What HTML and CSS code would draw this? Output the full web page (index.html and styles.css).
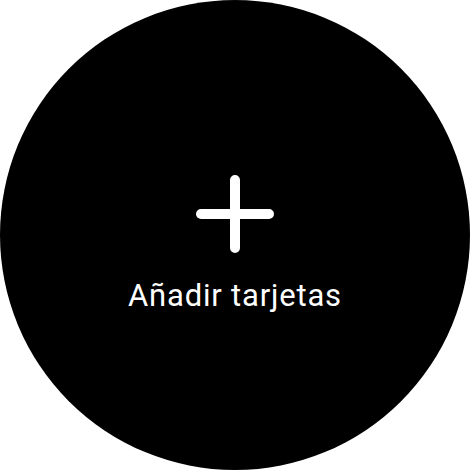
FILE: index.html
```html
<!doctype html>
<html lang="es">
<head>
  <meta charset="utf-8" />
  <meta name="viewport" content="width=device-width,initial-scale=1" />
  <title>Añadir tarjetas</title>
  <link rel="stylesheet" href="styles.css">
</head>
<body>
  <div class="watch">
    <div class="add">
      <svg class="plus" width="80" height="80" viewBox="0 0 80 80" aria-hidden="true">
        <path d="M40 6 V74 M6 40 H74" stroke="#fff" stroke-width="10" stroke-linecap="round" fill="none"/>
      </svg>
      <div class="label">Añadir tarjetas</div>
    </div>
  </div>
</body>
</html>
```

FILE: styles.css
```css
:root{--bg:#ffffff;--face:#000000;--fg:#ffffff}
html,body{margin:0;padding:0;background:var(--bg)}
body{font-family:Roboto,"Noto Sans",Arial,sans-serif;width:470px;height:470px;overflow:hidden}
.watch{width:470px;height:470px;box-sizing:border-box;padding-top:174px;border-radius:50%;background:var(--face);display:flex;justify-content:center}
.add{display:flex;flex-direction:column;align-items:center}
.plus{display:block}
.label{color:var(--fg);font-size:31px;letter-spacing:0.8px;margin-top:24px;line-height:36px}
```
